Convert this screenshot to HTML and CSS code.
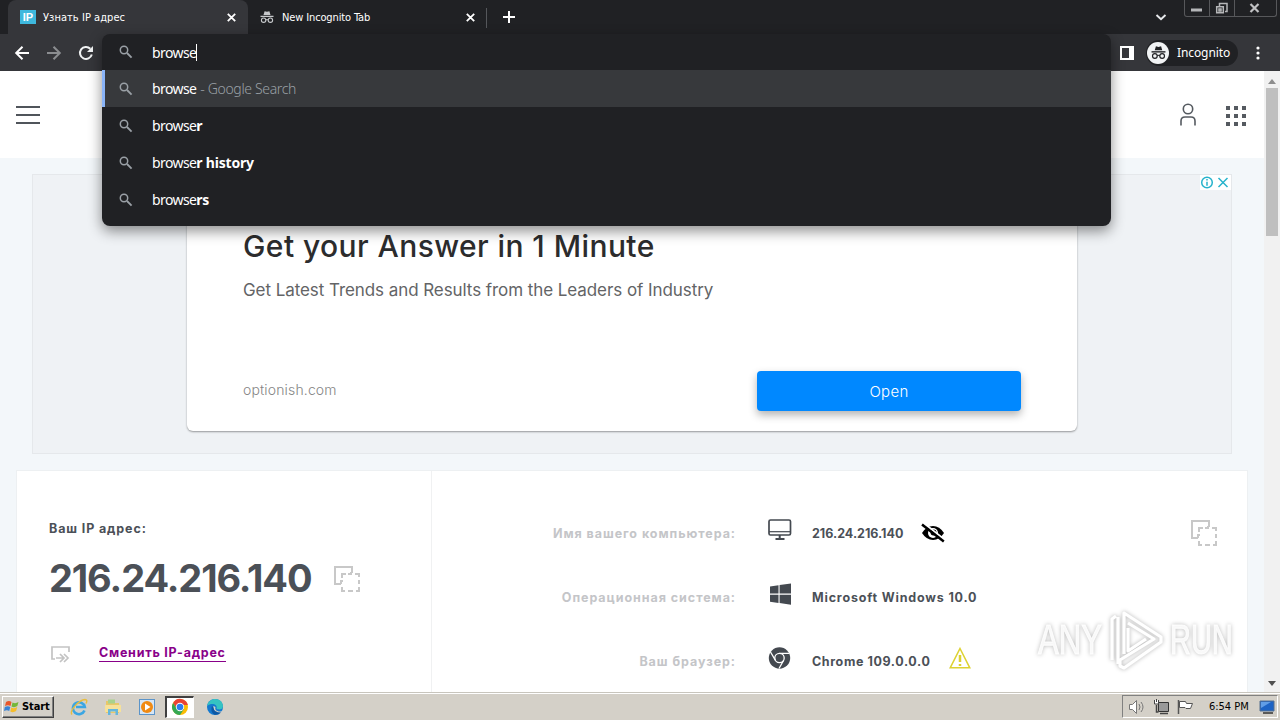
FILE: index.html
```html
<!DOCTYPE html>
<html lang="ru">
<head>
<meta charset="utf-8">
<title>Узнать IP адрес</title>
<link rel="stylesheet" href="styles.css">
</head>
<body>
<svg class="defs" width="0" height="0">
  <symbol id="search" viewBox="0 0 14 14"><circle cx="5" cy="5" r="3.7" fill="none" stroke="currentColor" stroke-width="1.5"/><path d="M8 8l4.6 4.6" stroke="currentColor" stroke-width="1.8"/></symbol>
  <symbol id="close" viewBox="0 0 9 9"><path d="M.8.8l7.4 7.4M8.2.8L.8 8.2" stroke="currentColor" stroke-width="1.8"/></symbol>
  <symbol id="spy" viewBox="0 0 14 14"><path d="M3.5 5L4.6 1.2 7 1.8l2.4-.6L10.5 5z" fill="currentColor"/><path d="M.5 6.4h13" stroke="currentColor" stroke-width="1.3"/><circle cx="3.6" cy="10.2" r="2.2" fill="none" stroke="currentColor" stroke-width="1.1"/><circle cx="10.4" cy="10.2" r="2.2" fill="none" stroke="currentColor" stroke-width="1.1"/><path d="M5.8 10q1.2-.9 2.4 0" fill="none" stroke="currentColor" stroke-width="1"/></symbol>
  <symbol id="copy" viewBox="0 0 28 28"><path d="M8 19H2V2h17v6M8 19v-3h2" fill="none" stroke="currentColor" stroke-width="2"/><path d="M9 13V9h4M15 9h3v-2M22 9h4v3M26 15v4M26 22v4h-3M20 26h-5M12 26H9v-4" fill="none" stroke="currentColor" stroke-width="2"/></symbol>
</svg>

<div class="tabs">
  <div class="tab active">
    <span class="fav">IP</span><span class="tab-title">Узнать IP адрес</span>
    <svg class="tab-close" width="9" height="9"><use href="#close"/></svg>
  </div>
  <div class="tab second">
    <svg class="spy" width="14" height="14"><use href="#spy"/></svg><span class="tab-title">New Incognito Tab</span>
    <svg class="tab-close" width="9" height="9"><use href="#close"/></svg>
  </div>
  <svg class="plus" width="12" height="12" viewBox="0 0 12 12"><path d="M6 0v12M0 6h12" stroke="#fff" stroke-width="2"/></svg>
  <svg class="chev" width="12" height="7" viewBox="0 0 12 7"><path d="M1.5 1L6 5.3 10.500 1" fill="none" stroke="#e8eaed" stroke-width="1.9"/></svg>
  <div class="wincontrols">
    <span class="wc"><svg width="24" height="17"><path d="M6 8.500h11v3H6z" fill="#b5b6b8"/></svg></span>
    <span class="wc"><svg width="24" height="17"><path d="M9.500 6V3.500h7.500v8h-2" fill="none" stroke="#b5b6b8" stroke-width="1.500"/><path d="M6.700 6.700h6.600v6.100H6.700zM9 9h2v2H9z" fill="none" stroke="#b5b6b8" stroke-width="1.500"/></svg></span>
    <span class="wc wide"><svg width="40" height="17"><path d="M15.500 4l8 8M23.500 4l-8 8" stroke="#c0c1c3" stroke-width="2.200"/></svg></span>
  </div>
</div>

<div class="toolbar">
  <svg class="nav" width="90" height="18" viewBox="0 0 90 18" fill="none" stroke-width="2">
    <path d="M16 9H3.500M9.500 2.700L3.200 9l6.300 6.300" stroke="#fff"/>
    <path d="M34 9h12.500M40.500 2.700L46.800 9l-6.300 6.300" stroke="#8b8d90"/>
    <path d="M77.300 4.700a6 6 0 1 0 1.500 5.800" stroke="#f1f3f4"/><path d="M80 2v6h-6z" fill="#f1f3f4"/>
  </svg>
  <div class="right-tools">
    <svg width="14" height="14"><path d="M0 0h14v14H0zM2 2v10h7V2z" fill="#fff" fill-rule="evenodd"/></svg>
    <div class="profile"><span class="avatar"><svg width="15" height="15"><use href="#spy"/></svg></span><span class="profile-name">Incognito</span></div>
    <svg width="4" height="14" fill="#fff"><circle cx="2" cy="2" r="1.600"/><circle cx="2" cy="7" r="1.600"/><circle cx="2" cy="12" r="1.600"/></svg>
  </div>
</div>

<div class="omnibox">
  <div class="row input"><svg width="14" height="14"><use href="#search"/></svg><span class="q">browse</span><i class="caret"></i></div>
  <div class="row selected"><svg width="14" height="14"><use href="#search"/></svg><span class="q">browse</span><span class="hint">- Google Search</span></div>
  <div class="row"><svg width="14" height="14"><use href="#search"/></svg><span class="q">browse<b>r</b></span></div>
  <div class="row"><svg width="14" height="14"><use href="#search"/></svg><span class="q">browse<b>r history</b></span></div>
  <div class="row"><svg width="14" height="14"><use href="#search"/></svg><span class="q">browse<b>rs</b></span></div>
</div>

<div class="view">
  <div class="page">
    <header class="head">
      <div class="burger"><i></i><i></i><i></i></div>
      <div class="head-icons">
        <svg width="18" height="24" viewBox="0 0 18 24" fill="none" stroke="#555a60" stroke-width="1.600"><circle cx="9" cy="6" r="4.700"/><path d="M2 22.500v-4.500q0-4 4-4h6q4 0 4 4v4.500"/></svg>
        <div class="dots"><i></i><i></i><i></i><i></i><i></i><i></i><i></i><i></i><i></i></div>
      </div>
    </header>
    <div class="ad">
      <div class="ad-badge"><svg width="31" height="15" viewBox="0 0 31 15" fill="none" stroke="#27b3cc" stroke-width="1.500"><circle cx="7" cy="7.500" r="5.300"/><path d="M7 6.700v4M7 4v1.500M18.500 3l9 9M27.500 3l-9 9"/></svg></div>
      <div class="card">
        <div class="ad-title">Get your Answer in 1 Minute</div>
        <div class="ad-text">Get Latest Trends and Results from the Leaders of Industry</div>
        <div class="ad-foot"><span class="domain">optionish.com</span><span class="open"><span>Open</span></span></div>
      </div>
    </div>
    <div class="panel">
      <section class="ip">
        <div class="label">Ваш IP адрес:</div>
        <div class="ip-line"><span class="big">216.24.216.140</span><svg class="copy" width="28" height="28"><use href="#copy"/></svg></div>
        <div class="change"><svg width="20" height="17" viewBox="0 0 20 17" fill="none" stroke="#c3c3c3" stroke-width="1.700"><path d="M4 13H1V1h17v5"/><path d="M5 12h7M9 8l4 4-4 4M13 8l4 4-4 4"/></svg><a>Сменить IP-адрес</a></div>
      </section>
      <section class="info">
        <div class="item"><span class="key k1">Имя вашего компьютера:</span>
          <svg class="ico" width="24" height="22" viewBox="0 0 24 22" fill="none" stroke="#444950"><rect x="1" y="1" width="21.500" height="15" rx="1.500" stroke-width="1.700"/><path d="M1 12.700h21.500" stroke-width="1.200"/><path d="M11.700 16v4M7.500 20h9" stroke-width="2"/></svg>
          <span class="val v1">216.24.216.140</span>
          <svg class="eye" width="24" height="20" viewBox="0 0 24 20"><path d="M1 10Q5.500 3 12 3t11 7q-4.500 7-11 7T1 10z" fill="#000"/><circle cx="12" cy="10" r="5" fill="#fff"/><circle cx="12.500" cy="9.500" r="3" fill="#000"/><path d="M2.500 0L24 17" stroke="#fff" stroke-width="2"/><path d="M1 1.500l21.800 17" stroke="#000" stroke-width="2.500"/></svg>
          <svg class="copy far" width="28" height="28"><use href="#copy"/></svg>
        </div>
        <div class="item"><span class="key k2">Операционная система:</span>
          <svg class="ico" width="24" height="22" viewBox="0 0 24 22"><path d="M2 3.500l8.500-1.200v8.200H2zM11.600 2.100L23 .5v10H11.600zM2 11.700h8.500v8.200L2 18.700zM11.600 11.700H23v10l-11.400-1.600z" fill="#444950"/></svg>
          <span class="val v2">Microsoft Windows 10.0</span></div>
        <div class="item"><span class="key k3">Ваш браузер:</span>
          <svg class="ico" width="24" height="22" viewBox="0 0 24 22"><circle cx="11.500" cy="11" r="10.700" fill="#444950"/><circle cx="11.500" cy="11" r="4.700" fill="none" stroke="#fff" stroke-width="1.300"/><path d="M11.500 6.300h9.500M7.300 13.200L2.500 5M15.700 13.200L11 21.500" stroke="#fff" stroke-width="1.300"/></svg>
          <span class="val v3">Chrome 109.0.0.0</span>
          <svg class="warn" width="22" height="22" viewBox="0 0 22 22" fill="none" stroke="#ddd231" stroke-width="1.500"><path d="M11 1.500L20.800 20.800H1.200z"/><path d="M11 8v7M11 17v2" stroke-width="2.500"/></svg></div>
      </section>
    </div>
    <div class="watermark">
      <span class="wm any">ANY</span>
      <svg width="60" height="64" viewBox="0 0 60 64" fill="none" stroke="#fff" stroke-width="3.200" stroke-linejoin="round"><path d="M20 46V5l37 24v5L20 60l-4-2v-6l34-21-26-16M8 52V11l4-3M14 56V9M24 20v23l18-12"/></svg>
      <span class="wm run">RUN</span>
    </div>
  </div>
  <div class="scroll"><i class="up"></i><i class="thumb"></i><i class="down"></i></div>
</div>

<div class="taskbar">
  <div class="start"><svg width="16" height="15" viewBox="0 0 16 15"><path d="M2 3q3-2 5.500 0L6.500 7Q4 5.300 1 7z" fill="#e9572b"/><path d="M8.500 3.500q3 1.500 6-.5l-1.200 4q-2.800 2-5.800.5z" fill="#74b739"/><path d="M.8 8q3-1.700 5.500 0L5.200 12Q3 10.300 0 12z" fill="#3a83d6"/><path d="M7.300 8.500q3 1.500 6-.5l-1.200 4q-2.800 2-5.800.5z" fill="#f5bd2b"/></svg><b>Start</b></div>
  <div class="apps">
    <span class="app"><svg width="18" height="18" viewBox="0 0 18 18"><path d="M14.500 12.500a6 6 0 1 1 .3-3.500H6" fill="none" stroke="#3ba6e3" stroke-width="2.600"/><path d="M2 16.500C-1 13 9 2 15 1.500q3 0 1 4" fill="none" stroke="#e8bd3e" stroke-width="1.400"/></svg></span>
    <span class="app"><svg width="18" height="18" viewBox="0 0 18 18"><path d="M2 3h5l1 2h7v10H2z" fill="#e8c768"/><path d="M4 1.500h7v4H4z" fill="#a9d28c"/><path d="M1 7h16v7H1z" fill="#f6e19a"/><path d="M4 17v-6h10v6h-2.500v-3.500h-5V17z" fill="#65b6dc"/></svg></span>
    <span class="app"><svg width="18" height="18" viewBox="0 0 18 18"><rect x="1.500" y="1.500" width="15" height="15" fill="#d6e6f5" stroke="#5b94c9"/><circle cx="9" cy="9" r="6" fill="#f08a12"/><path d="M7 5.500l5.500 3.500L7 12.500z" fill="#fff"/></svg></span>
    <span class="app pressed"><svg width="18" height="18" viewBox="0 0 18 18"><circle cx="9" cy="9" r="8" fill="#fbbc05"/><path d="M2.070 5A8 8 0 0 1 16.900 7H9L6.300 11z" fill="#ea4335"/><path d="M2.070 5A8 8 0 0 0 9 17l4-6H6z" fill="#34a853"/><circle cx="9" cy="9" r="4.200" fill="#fff"/><circle cx="9" cy="9" r="3.300" fill="#2d7df0"/></svg></span>
    <span class="app"><svg width="18" height="18" viewBox="0 0 18 18"><circle cx="9" cy="9" r="8" fill="#1479cf"/><path d="M1.200 8C2 3 6 1 9 1q7 0 8 7c0 4-5 4-6.500 2.500C12 7 6 4 1.200 8z" fill="#35c3c2"/><path d="M7.500 8q-2 6 3 7.500 4 1 6-2.500-3 1-5 0-3-1-2-4z" fill="#d4d0c8"/><path d="M6 8q-2 5 2 8.500 4 1 7-2-7 0-7.500-5z" fill="#0c58a5"/></svg></span>
  </div>
  <div class="tray">
    <svg width="18" height="16" viewBox="0 0 18 16" fill="#fff" stroke="#777"><path d="M1.500 5.500h3l4-4v13l-4-4h-3z"/><path d="M11 5q2 3 0 6M13 3q4 5 0 10" fill="none"/></svg>
    <svg width="17" height="16" viewBox="0 0 17 16"><path d="M5.500 3.500h10v9h-10z" fill="#999" stroke="#333"/><path d="M7 14.500h8M3.500 6v7h2" fill="none" stroke="#444" stroke-width="1.500"/><path d="M1.500 1v4h4V1M3.500 0v3" fill="#fff" stroke="#444"/></svg>
    <svg width="17" height="16" viewBox="0 0 17 16" fill="#fff" stroke="#555"><path d="M2.500 2.500h6l1 2h6l-2 5H9l-1-1H2.500z"/><path d="M1.500 1v14" stroke-width="1.500"/></svg>
    <span class="clock">6:54 PM</span>
    <svg width="16" height="14" viewBox="0 0 16 14"><path d="M1 1h14v10H1z" fill="#1d63c4" stroke="#57718f"/><path d="M2 2h10L2 8z" fill="#609de6"/><path d="M4 13h10" stroke="#333" stroke-width="1.500"/></svg>
  </div>
</div>
</body>
</html>
```
FILE: styles.css
```css
* { box-sizing: border-box; }
body { margin: 0; width: 1280px; height: 720px; overflow: hidden; display: flex; flex-direction: column; position: relative; font-family: "Noto Sans", sans-serif; background: #f3f7fa; }
svg { display: block; flex: none; }
.defs { position: absolute; }

.tabs { height: 34px; flex: none; background: #202124; display: flex; align-items: center; padding-left: 8px; color: #fff; }
.tab { display: flex; align-items: center; height: 34px; font-family: "DejaVu Sans Condensed", "DejaVu Sans", sans-serif; font-stretch: condensed; font-size: 11px; white-space: nowrap; }
.tab.active { width: 240px; background: #35363a; border-radius: 8px 8px 0 0; padding: 0 12px 0 12px; }
.tab.second { width: 239px; padding: 0 11px 0 12px; border-right: 1px solid transparent; border-image: linear-gradient(transparent 24%, #55575b 24% 80%, transparent 80%) 1; }
.fav { width: 16px; height: 14px; background: #3eb8dd; font: bold 11px/14px "Liberation Sans", sans-serif; text-align: center; }
.tab-title { margin-left: 7px; letter-spacing: .05px; }
.spy { color: #c6c8cb; }
.second .tab-title { margin-left: 8px; letter-spacing: -.13px; }
.tab-close { margin-left: auto; }
.plus { margin-left: 16px; }
.chev { margin-left: auto; margin-right: 17px; }
.wincontrols { display: flex; align-self: flex-start; width: 93px; height: 17px; margin-right: 3px; border: 1px solid #57585b; border-top: 0; border-radius: 0 0 3px 3px; }
.wc { width: 25px; border-right: 1px solid #57585b; }
.wc.wide { width: 41px; border: 0; }

.toolbar { height: 37px; flex: none; background: #35363a; display: flex; align-items: center; padding-left: 13px; }
.right-tools { margin-left: auto; display: flex; align-items: center; padding-right: 20px; color: #fff; }
.profile { display: flex; align-items: center; width: 92px; height: 26px; margin: 0 18px 0 12px; border-radius: 13px; background: #202124; padding-left: 2px; }
.avatar { width: 22px; height: 22px; border-radius: 50%; background: #f1f3f4; color: #202124; display: flex; align-items: center; justify-content: center; margin-left: -1px; }
.profile-name { margin-left: 8px; font-size: 12px; letter-spacing: -.1px; }

.omnibox { position: absolute; left: 102px; top: 34px; width: 1009px; height: 192px; background: #202124; border-radius: 8px; box-shadow: 0 5px 14px rgba(0,0,0,.45); overflow: hidden; z-index: 5; color: #9aa0a6; font-size: 14px; }
.row { height: 37px; display: flex; align-items: center; padding-left: 17px; }
.row.input { height: 36px; }
.row.selected { background: #37393c; border-left: 3px solid #8ab4f8; padding-left: 14px; }
.q { margin-left: 19px; color: #fff; letter-spacing: -.6px; }
.q b { letter-spacing: -.2px; }
.hint { margin-left: 4px; letter-spacing: -.35px; font-weight: 300; }
.caret { width: 1px; height: 17px; background: #fff; }

.view { flex: 1; min-height: 0; display: flex; }
.page { width: 1264px; overflow: hidden; position: relative; background: #f3f7fa; }
.head { height: 87px; background: #fff; display: flex; justify-content: space-between; align-items: center; padding: 0 18px 0 16px; }
.burger { width: 24px; display: flex; flex-direction: column; gap: 6px; }
.burger i { height: 2px; background: #50555b; }
.head-icons { display: flex; align-items: center; gap: 29px; }
.dots { display: grid; grid-template-columns: repeat(3, 4px); row-gap: 4px; width: 20px; justify-content: space-between; margin-top: 2px; }
.dots i { width: 4px; height: 4px; background: #555a60; }

.ad { position: relative; width: 1200px; height: 280px; margin: 16px 0 0 32px; background: #eff2f5; border: 1px solid #e5e8eb; padding: 0 154px; }
.ad-badge { position: absolute; right: 0; top: 0; background: #fff; }
.card { height: 256px; background: #fff; border-radius: 6px; box-shadow: 0 1px 2px rgba(0,0,0,.38); padding: 49px 56px 0; display: flex; flex-direction: column; font-family: Inter, sans-serif; }
.ad-title { font-size: 30px; font-weight: 500; line-height: 44px; color: #2c2c2d; letter-spacing: .42px; white-space: nowrap; }
.ad-text { margin-top: 10px; font-size: 17px; line-height: 24px; color: #636466; letter-spacing: -.07px; white-space: nowrap; }
.ad-foot { display: flex; justify-content: space-between; align-items: center; margin-top: 69px; }
.domain { font-weight: 300; font-size: 14px; line-height: 18px; padding-bottom: 3px; letter-spacing: .15px; color: #858585; }
.open { width: 264px; height: 40px; background: #0088ff; border-radius: 4px; color: #fff; display: flex; align-items: center; justify-content: center; font-size: 15px; letter-spacing: .3px; font-weight: 300; box-shadow: 0 4px 8px rgba(0,0,0,.3); }

.panel { width: 1232px; height: 230px; margin: 16px 0 0 16px; background: #fff; border: 1px solid #edf0f2; display: flex; font-family: Inter, sans-serif; font-weight: 700; color: #4b5057; font-size: 12.5px; white-space: nowrap; }
.ip { width: 415px; border-right: 1px solid #f0f1f2; padding: 48px 0 0 32px; }
.label { line-height: 20px; letter-spacing: .88px; }
.ip-line { display: flex; align-items: center; height: 48px; margin-top: 15px; }
.ip-line .copy { margin-top: 2px; }
.big { width: 284px; font-size: 38px; letter-spacing: -1.1px; }
.copy { color: #c8c8c8; }
.change { display: flex; align-items: center; margin-top: 41px; padding-left: 2px; }
.change svg { margin-top: 3px; }
.change a { margin-left: 28px; color: #890089; border-bottom: 1px solid #890089; line-height: 16px; letter-spacing: .75px; }
.info { flex: 1; padding-top: 30px; }
.item { height: 64px; display: flex; align-items: center; }
.key { width: 304px; text-align: right; color: #c4c5c8; letter-spacing: .95px; }
.ico { margin: -6px 20px 0 32px; }
.v1 { width: 91px; }
.v2 { letter-spacing: .82px; }
.v3 { letter-spacing: .6px; }
.eye { margin-left: 18px; }
.warn { margin: -6px 0 0 19px; }
.far { margin-left: auto; margin-right: 29px; }
.watermark { position: absolute; left: 1038px; top: 537px; display: flex; align-items: center; filter: drop-shadow(0 0 2px rgba(0,0,0,.3)); }
.wm { font: 400 42px/64px "Liberation Sans", sans-serif; color: rgba(255,255,255,.85); -webkit-text-stroke: 1px rgba(255,255,255,.85); transform-origin: left; white-space: nowrap; width: 66px; }
.any { transform: scaleX(.74); }
.run { transform: scaleX(.69); margin-left: 6px; }
.scroll { width: 16px; background: #f1f1f1; display: flex; flex-direction: column; align-items: center; }
.up { margin-top: 8px; border: 4px solid transparent; border-top: 0; border-bottom: 5px solid #8d8d8d; }
.thumb { width: 12px; height: 148px; margin-top: 4px; background: #bfbfbf; }
.down { margin: auto 0 6px; border: 4px solid transparent; border-bottom: 0; border-top: 5px solid #505050; }

.taskbar { height: 28px; flex: none; background: #d4d0c8; border-top: 1px solid #c8c5bd; box-shadow: inset 0 1px #fff; display: flex; align-items: center; padding: 2px 2px 2px; font-family: "DejaVu Sans Condensed", "DejaVu Sans", sans-serif; font-stretch: condensed; font-size: 11px; color: #000; }
.start { width: 52px; height: 22px; display: flex; align-items: center; gap: 2px; padding-left: 1px; border: 1px solid; border-color: #fff #404040 #404040 #fff; box-shadow: inset -1px -1px #808080; }
.start b { letter-spacing: -.1px; }
.apps { display: flex; margin-left: 8px; }
.app { width: 34px; height: 22px; display: flex; align-items: center; justify-content: center; }
.app.pressed { width: 29px; margin: 0 4px 0 1px; background: #fff; border: 1px solid; border-width: 2px 1px 1px 2px; border-color: #404040 #fff #fff #404040; }
.tray { margin-left: auto; width: 156px; height: 23px; display: flex; align-items: center; border: 1px solid; border-color: #808080 #fff #fff #808080; padding-left: 5px; gap: 7px; }
.clock { margin-left: 8px; letter-spacing: -.02px; white-space: nowrap; }
.clock + svg { margin-left: 3px; }
```
